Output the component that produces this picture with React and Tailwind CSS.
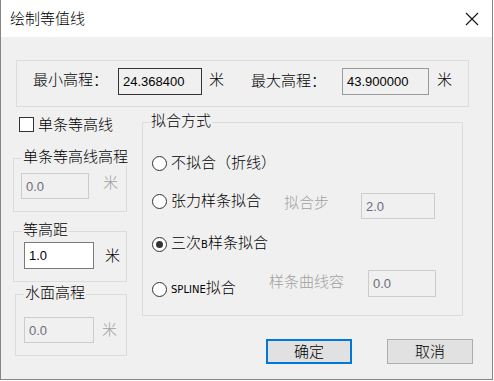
import React from "react";

function Group({ label, className, labelLeft, children }) {
  return (
    <div className={"relative border border-[#dcdcdc] " + className}>
      <span
        className={
          "absolute top-[-11px] whitespace-nowrap bg-[#f0f0f0] px-[1px] text-[15px] leading-[18px] text-black " +
          labelLeft
        }
      >
        {label}
      </span>
      {children}
    </div>
  );
}

function Radio({ checked }) {
  return (
    <div className="w-[15px] h-[15px] shrink-0 rounded-full border border-[#333333] bg-white flex items-center justify-center">
      {checked && <div className="w-[7px] h-[7px] rounded-full bg-[#333333]" />}
    </div>
  );
}

function Field({ value, className }) {
  return (
    <div
      className={
        "flex items-center pl-[4px] text-[13px] font-normal leading-none font-['Liberation_Sans',sans-serif] " +
        className
      }
    >
      {value}
    </div>
  );
}

export default function App() {
  return (
    <div className="w-[494px] h-[381px] bg-white text-[15px] font-light text-black font-['Liberation_Sans','Noto_Sans_CJK_SC',sans-serif]">
      <div className="w-[493px] h-[380px] flex flex-col border-l border-r border-b border-[#858585] bg-[#f0f0f0]">
        {/* title bar */}
        <div className="h-[37px] shrink-0 bg-white flex items-center justify-between pl-[9px] pr-[13px]">
          <span className="text-[15px] leading-[20px]">绘制等值线</span>
          <svg width="14" height="14" viewBox="0 0 14 14" className="mt-[1px]">
            <path d="M1 1 L13 13 M13 1 L1 13" stroke="#111" strokeWidth="1.1" fill="none" />
          </svg>
        </div>

        {/* min / max */}
        <div className="mt-[23px] ml-[15px] w-[453px] h-[47px] border border-[#dcdcdc] flex items-start pt-[7px] pl-[16px]">
          <div className="flex items-center h-[27px]">
            <span className="w-[85px] leading-[18px] mt-[-3px]">最小高程：</span>
            <Field value="24.368400" className="w-[84px] h-[27px] border border-[#333333] bg-[#f0f0f0]" />
            <span className="ml-[7px] w-[42px] leading-[18px] mt-[-3px]">米</span>
            <span className="w-[91px] leading-[18px] mt-[-1px]">最大高程：</span>
            <Field value="43.900000" className="w-[87px] h-[27px] border border-[#9a9a9a] bg-[#f0f0f0]" />
            <span className="ml-[8px] leading-[18px] mt-[-3px]">米</span>
          </div>
        </div>

        <div className="flex ml-[12px]">
          {/* left column */}
          <div className="w-[114px] flex flex-col">
            <div className="mt-[10px] ml-[6px] h-[15px] flex items-center">
              <div className="w-[15px] h-[15px] border border-[#333333] bg-white" />
              <span className="ml-[4px] leading-[18px]">单条等高线</span>
            </div>

            <Group label="单条等高线高程" labelLeft="left-[8px]" className="mt-[26px] h-[54px] pl-[7px] pt-[14px]">
              <div className="flex items-start">
                <Field value="0.0" className="w-[68px] h-[26px] border border-[#cccccc] bg-[#f0f0f0] text-[#6d6d78]" />
                <span className="ml-[14px] mt-[1px] leading-[18px] text-[#a0a0a0]">米</span>
              </div>
            </Group>

            <Group label="等高距" labelLeft="left-[8px]" className="mt-[19px] h-[51px] pl-[10px] pt-[10px]">
              <div className="flex items-center">
                <Field value="1.0" className="w-[70px] h-[27px] border border-[#7a7a7a] bg-white" />
                <span className="ml-[11px] leading-[18px]">米</span>
              </div>
            </Group>

            <Group label="水面高程" labelLeft="left-[8px]" className="mt-[12px] ml-[2px] h-[62px] pl-[8px] pt-[22px]">
              <div className="flex items-center">
                <Field value="0.0" className="w-[70px] h-[26px] border border-[#cccccc] bg-[#f0f0f0] text-[#6d6d78]" />
                <span className="ml-[8px] leading-[18px] text-[#a0a0a0]">米</span>
              </div>
            </Group>
          </div>

          {/* right column */}
          <div className="flex flex-col">
            <Group label="拟合方式" labelLeft="left-[7px]" className="mt-[15px] ml-[15px] w-[321px] h-[194px] flex flex-col pl-[9px]">
              <div className="mt-[27px] h-[26px] flex items-center">
                <Radio />
                <span className="ml-[4px] leading-[18px]">不拟合（折线）</span>
              </div>

              <div className="mt-[12px] h-[26px] flex items-center">
                <div className="w-[132px] flex items-center">
                  <Radio />
                  <span className="ml-[4px] leading-[18px]">张力样条拟合</span>
                </div>
                <span className="w-[77px] mt-[4px] leading-[18px] text-[#a0a0a0]">拟合步</span>
                <Field value="2.0" className="w-[74px] h-[26px] mt-[10px] border border-[#cccccc] bg-[#f0f0f0] text-[#6d6d78]" />
              </div>

              <div className="mt-[17px] h-[26px] flex items-center">
                <Radio checked />
                <span className="ml-[4px] leading-[18px]">
                  三次<span className="text-[10px] font-normal font-['DejaVu_Sans',sans-serif]">B</span>样条拟合
                </span>
              </div>

              <div className="mt-[19px] h-[26px] flex items-center">
                <div className="w-[117px] flex items-center">
                  <Radio />
                  <span className="ml-[4px] leading-[18px]">
                    <span className="text-[10px] font-normal font-['DejaVu_Sans',sans-serif]">SPLINE</span>拟合
                  </span>
                </div>
                <span className="w-[99px] mb-[14px] leading-[18px] text-[#a0a0a0]">样条曲线容</span>
                <Field value="0.0" className="w-[68px] h-[27px] mb-[11px] border border-[#cccccc] bg-[#f0f0f0] text-[#6d6d78]" />
              </div>
            </Group>

            <div className="mt-[23px] ml-[139px] flex gap-[35px]">
              <button className="w-[86px] h-[25px] border-2 border-[#0078d7] bg-[#e1e1e1] text-[15px] leading-none">
                确定
              </button>
              <button className="w-[86px] h-[25px] border border-[#adadad] bg-[#e1e1e1] text-[15px] leading-none">
                取消
              </button>
            </div>
          </div>
        </div>
      </div>
    </div>
  );
}
